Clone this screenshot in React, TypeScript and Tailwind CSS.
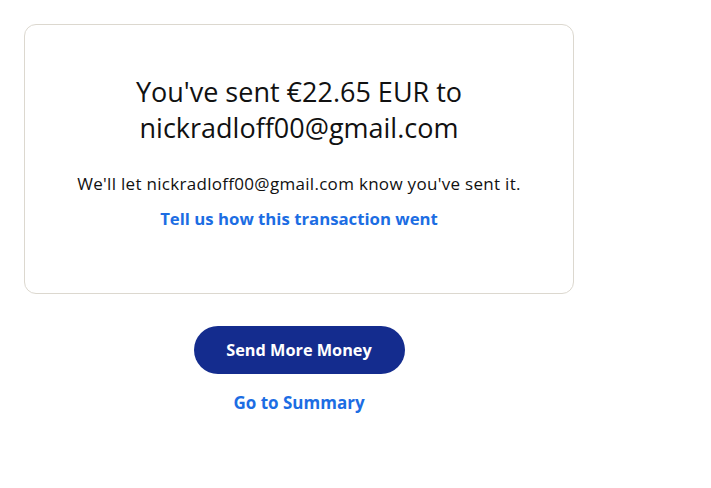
import React from 'react';

const font = { fontFamily: '"Open Sans", Lato, sans-serif' };

export default function App() {
  return (
    <div className="min-h-screen bg-white pt-6 pl-6" style={font}>
      <div className="w-[550px] flex flex-col items-center">
        <div className="w-full h-[270px] rounded-xl border border-[#dcd8cf] flex flex-col items-center pt-[49px]">
          <h1 className="text-[27px] leading-[36px] text-[#111] text-center w-[380px]">
            You've sent €22.65 EUR to nickradloff00@gmail.com
          </h1>
          <p className="mt-[26px] text-[17px] leading-6 tracking-[0.3px] text-[#111]">
            We'll let nickradloff00@gmail.com know you've sent it.
          </p>
          <a href="#" className="mt-[11px] text-[16.75px] leading-6 font-bold text-[#1c6de3]">
            Tell us how this transaction went
          </a>
        </div>
        <button className="mt-8 w-[211px] h-12 rounded-full bg-[#142c8e] text-white text-[16.3px] font-bold">
          Send More Money
        </button>
        <a href="#" className="mt-[17px] text-[17px] leading-6 font-bold text-[#1c6de3]">
          Go to Summary
        </a>
      </div>
    </div>
  );
}
